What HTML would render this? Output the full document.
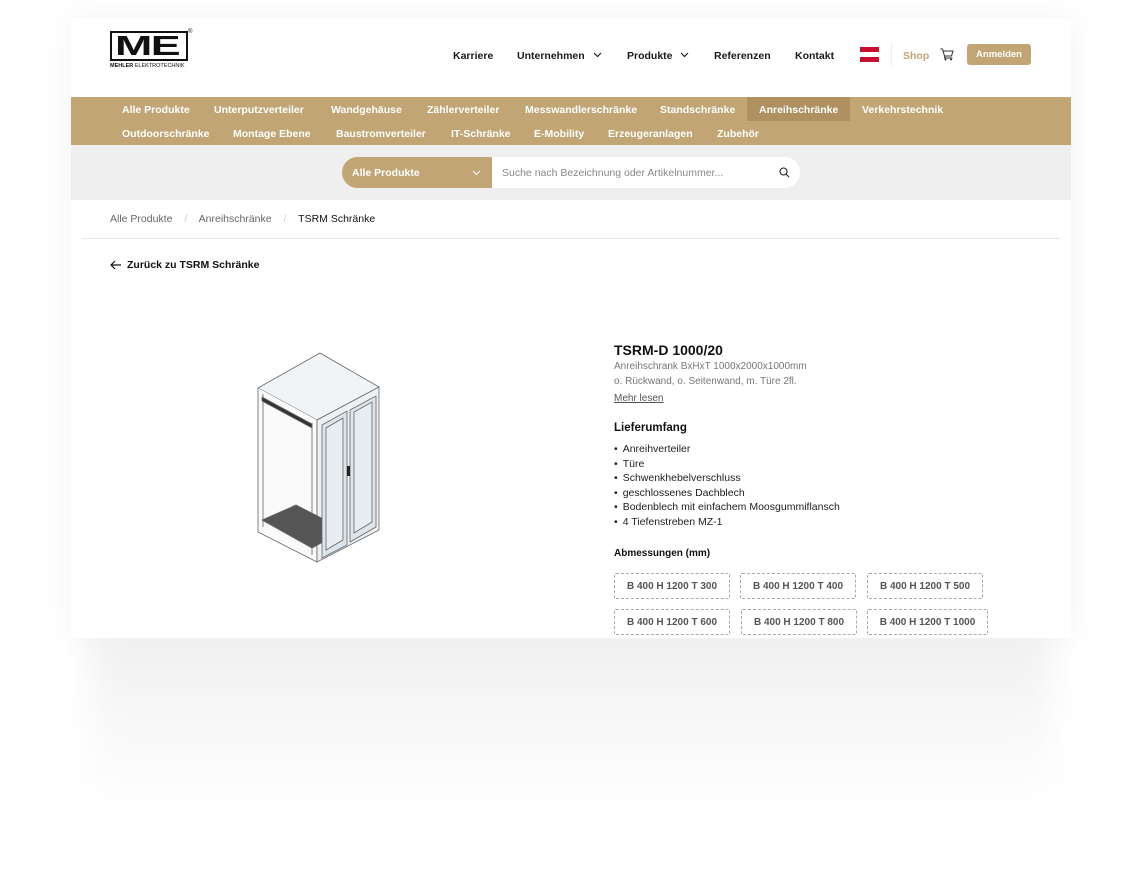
<!DOCTYPE html>
<html><head><meta charset="utf-8"><style>
*{margin:0;padding:0;box-sizing:border-box}
body{width:1142px;height:886px;background:#fff;font-family:"Liberation Sans",sans-serif;position:relative;overflow:hidden;color:#111}
.a{position:absolute;white-space:nowrap}
#shadow{position:absolute;left:90px;top:634px;width:962px;height:180px;background:linear-gradient(#f0f0f0,#f8f8f8 50%,#fff);filter:blur(16px)}
#card{position:absolute;left:71px;top:18px;width:1000px;height:620px;background:#fff;box-shadow:0 0 30px rgba(0,0,0,.05);overflow:hidden}
.hn{font-size:10.5px;font-weight:bold;color:#1a1a1a;top:32px}
.nav{position:absolute;left:0;top:79px;width:1000px;height:48px;background:#c2a574}
.ni{font-size:10.5px;font-weight:bold;color:#fff}
.sb{position:absolute;left:0;top:127px;width:1000px;height:55px;background:#efefef}
.dim{position:absolute;width:116px;height:26px;border:1px dashed #aaa;border-radius:2px;font-size:10px;font-weight:bold;color:#555;text-align:center;line-height:25px}
li{list-style:none;font-size:10.5px;color:#222;height:14.5px}
li:before{content:"•";margin-right:5px}
</style></head><body>
<div id="shadow"></div>
<div id="card">
 <div class="a" style="left:39px;top:13px;width:78px;height:30px;border:2.5px solid #111;"></div>
 <div class="a" style="left:44px;top:14px;font-size:28px;font-weight:900;letter-spacing:-1px;line-height:28px;color:#111;transform:scaleX(1.6);transform-origin:left">ME</div>
 <div class="a" style="left:117px;top:11px;font-size:6px">®</div>
 <div class="a" style="left:39px;top:45px;font-size:5.5px;font-weight:bold">MEHLER <span style="font-weight:normal">ELEKTROTECHNIK</span></div>
 <div class="a hn" style="left:382px">Karriere</div>
 <div class="a hn" style="left:446px">Unternehmen</div>
 <svg class="a" style="left:522px;top:34px" width="9" height="6"><path d="M1 1l3.5 3.5L8 1" fill="none" stroke="#222" stroke-width="1.2"/></svg>
 <div class="a hn" style="left:556px">Produkte</div>
 <svg class="a" style="left:609px;top:34px" width="9" height="6"><path d="M1 1l3.5 3.5L8 1" fill="none" stroke="#222" stroke-width="1.2"/></svg>
 <div class="a hn" style="left:643px">Referenzen</div>
 <div class="a hn" style="left:724px">Kontakt</div>
 <div class="a" style="left:789px;top:29px;width:19px;height:15px;background:linear-gradient(#c8102e 33%,#fff 33%,#fff 66%,#c8102e 66%)"></div>
 <div class="a" style="left:820px;top:25px;width:1px;height:24px;background:#eee"></div>
 <div class="a hn" style="left:832px;color:#c2a574">Shop</div>
 <svg class="a" style="left:869px;top:30px" width="14" height="13" viewBox="0 0 14 13"><path d="M0.5 1h2l2 7h7l1.5-5H3.5M5 8l-.5 2h8" fill="none" stroke="#333" stroke-width="1"/><circle cx="5.5" cy="11.5" r="1" fill="#333"/><circle cx="11" cy="11.5" r="1" fill="#333"/></svg>
 <div class="a" style="left:896px;top:26px;width:64px;height:21px;background:#c2a574;border-radius:3px;color:#fff;font-size:9.5px;font-weight:bold;text-align:center;line-height:21px">Anmelden</div>
 <div class="nav">
  <div class="a" style="left:676px;top:0;width:103px;height:24px;background:#ae9061"></div>
  <div class="a ni" style="left:51px;top:7px">Alle Produkte</div>
  <div class="a ni" style="left:143px;top:7px">Unterputzverteiler</div>
  <div class="a ni" style="left:260px;top:7px">Wandgehäuse</div>
  <div class="a ni" style="left:356px;top:7px">Zählerverteiler</div>
  <div class="a ni" style="left:454px;top:7px">Messwandlerschränke</div>
  <div class="a ni" style="left:589px;top:7px">Standschränke</div>
  <div class="a ni" style="left:688px;top:7px">Anreihschränke</div>
  <div class="a ni" style="left:791px;top:7px">Verkehrstechnik</div>
  <div class="a ni" style="left:51px;top:31px">Outdoorschränke</div>
  <div class="a ni" style="left:162px;top:31px">Montage Ebene</div>
  <div class="a ni" style="left:265px;top:31px">Baustromverteiler</div>
  <div class="a ni" style="left:380px;top:31px">IT-Schränke</div>
  <div class="a ni" style="left:463px;top:31px">E-Mobility</div>
  <div class="a ni" style="left:537px;top:31px">Erzeugeranlagen</div>
  <div class="a ni" style="left:646px;top:31px">Zubehör</div>
 </div>
 <div class="sb">
  <div class="a" style="left:271px;top:12px;width:458px;height:31px;background:#fff;border-radius:16px;overflow:hidden">
   <div class="a" style="left:0;top:0;width:150px;height:31px;background:#c2a574"></div>
   <div class="a" style="left:10px;top:10px;font-size:10.5px;font-weight:bold;color:#fff">Alle Produkte</div>
   <svg class="a" style="left:130px;top:13px" width="9" height="6"><path d="M1 1l3.5 3.5L8 1" fill="none" stroke="#fff" stroke-width="1"/></svg>
   <div class="a" style="left:160px;top:10px;font-size:10.5px;color:#888">Suche nach Bezeichnung oder Artikelnummer...</div>
   <svg class="a" style="left:437px;top:10px" width="11" height="11"><circle cx="4.5" cy="4.5" r="3.5" fill="none" stroke="#222" stroke-width="1.1"/><path d="M7 7l3 3" stroke="#222" stroke-width="1.1"/></svg>
  </div>
 </div>
 <div class="a" style="left:39px;top:195px;font-size:10.5px;color:#666">Alle Produkte <span style="color:#ccc;margin:0 9px">/</span> Anreihschränke <span style="color:#ccc;margin:0 9px">/</span> <span style="color:#111">TSRM Schränke</span></div>
 <div class="a" style="left:11px;top:220px;width:978px;height:1px;background:#e4e4e4"></div>
 <svg class="a" style="left:39px;top:242px" width="12" height="10"><path d="M11 5H1.5M5 1L1 5l4 4" fill="none" stroke="#111" stroke-width="1.2"/></svg>
 <div class="a" style="left:56px;top:241px;font-size:10.5px;font-weight:bold">Zurück zu TSRM Schränke</div>
 <svg class="a" style="left:0;top:0" width="1000" height="620" viewBox="71 18 1000 620">
  <g stroke="#666" stroke-width="0.8" fill="none">
   <path d="M320 353L258 388L317 420L379 387Z" fill="#f1f4f6"/>
   <path d="M258 388V532L317 562V420" fill="#fafafa"/>
   <path d="M317 420L379 387V530L317 562Z" fill="#eef1f4"/>
   <path d="M263 394V527M312 423V555"/>
   <path d="M262 397L312 424V428L262 401Z" fill="#333"/>
   <path d="M262 520L312 548L345 530L296 505Z" fill="#555"/>
   <path d="M322 425L347 411V545L322 558Z" fill="#dde4ea"/>
   <path d="M326 428L343 418V540L326 550Z" fill="#e8edf1"/>
   <path d="M350 410L376 396V527L350 542Z" fill="#dde4ea"/>
   <path d="M354 412L372 402V522L354 533Z" fill="#e8edf1"/>
  </g>
  <rect x="347" y="466" width="3" height="10" fill="#222"/>
 </svg>
 <div class="a" style="left:543px;top:324px;font-size:14px;font-weight:bold">TSRM-D 1000/20</div>
 <div class="a" style="left:543px;top:342px;font-size:10px;color:#777;line-height:14.5px">Anreihschrank BxHxT 1000x2000x1000mm<br>o. Rückwand, o. Seitenwand, m. Türe 2fl.</div>
 <div class="a" style="left:543px;top:375px;font-size:10px;color:#555;text-decoration:underline">Mehr lesen</div>
 <div class="a" style="left:543px;top:404px;font-size:11.5px;font-weight:bold">Lieferumfang</div>
 <ul class="a" style="left:543px;top:425px">
  <li>Anreihverteiler</li><li>Türe</li><li>Schwenkhebelverschluss</li><li>geschlossenes Dachblech</li><li>Bodenblech mit einfachem Moosgummiflansch</li><li>4 Tiefenstreben MZ-1</li>
 </ul>
 <div class="a" style="left:543px;top:530px;font-size:10px;font-weight:bold">Abmessungen (mm)</div>
 <div class="dim" style="left:543px;top:555px">B 400 H 1200 T 300</div>
 <div class="dim" style="left:669px;top:555px">B 400 H 1200 T 400</div>
 <div class="dim" style="left:796px;top:555px">B 400 H 1200 T 500</div>
 <div class="dim" style="left:543px;top:591px">B 400 H 1200 T 600</div>
 <div class="dim" style="left:670px;top:591px">B 400 H 1200 T 800</div>
 <div class="dim" style="left:796px;top:591px;width:121px">B 400 H 1200 T 1000</div>
</div>
</body></html>
